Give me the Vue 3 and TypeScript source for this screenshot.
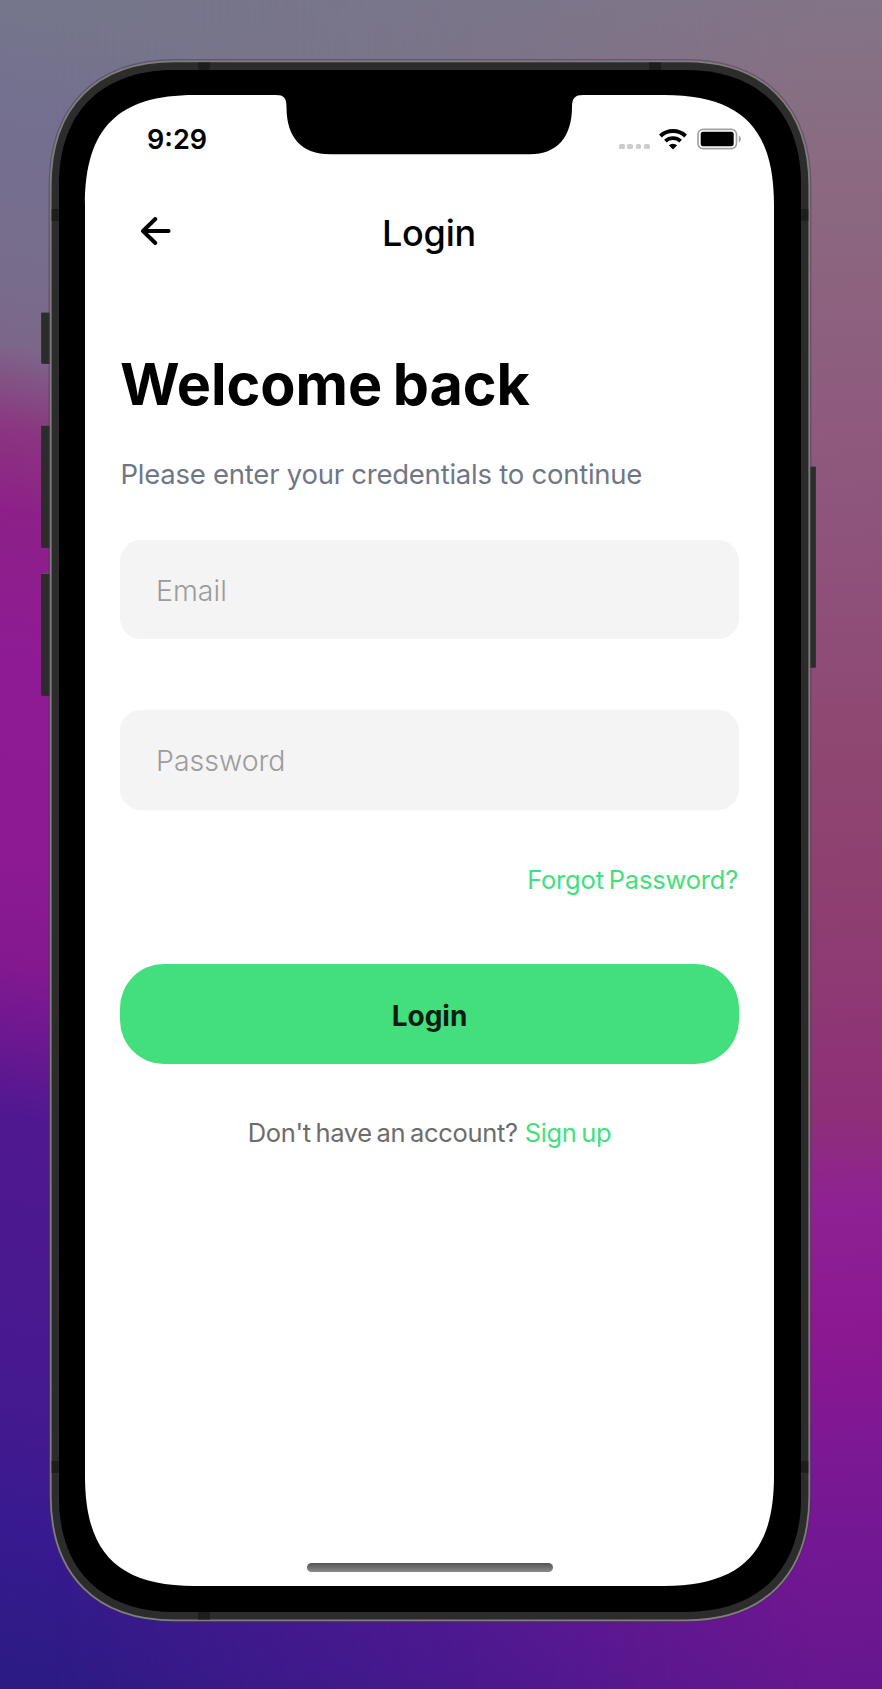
<script setup lang="ts">
import { ref } from 'vue'

const email = ref('')
const password = ref('')
const signalDots = [0, 1, 2, 3]
</script>

<template>
  <main class="stage">
    <div class="wash"></div>
    <svg class="device" viewBox="0 0 882 1689" aria-hidden="true">
      <g fill="#2c2c2c" stroke="#222" stroke-opacity=".55">
        <rect x="41.5" y="312.5" width="12" height="51" rx="1" />
        <rect x="41.5" y="425.5" width="12" height="122" rx="1" />
        <rect x="41.5" y="573.5" width="12" height="122" rx="1" />
        <rect x="806" y="466.500" width="9.500" height="201" rx="1" />
      </g>
      <g stroke="#555" stroke-width="1">
        <path d="M42 312.500H50M42 425.500H50M42 573.500H50M810 466.500H815" />
      </g>
      <path fill="none" stroke="#403048" stroke-opacity=".4" stroke-width="4" d="M50.500 186C50.500 107 96 61 175 61H685C764 61 809.500 107 809.500 186V1496C809.500 1575 764 1620.500 685 1620.500H175C96 1620.500 50.500 1575 50.500 1496Z" />
      <path fill="#2c2c2c" stroke="#807e7d" stroke-width="1.800" d="M50.700 186C50.700 107 96 61.300 175 61.300H685C764 61.300 809.300 107 809.300 186V1496C809.300 1575 764 1620.300 685 1620.300H175C96 1620.300 50.700 1575 50.700 1496Z" />
      <path fill="#1d1d1d" d="M198 62.500h12v7.500h-12zM649 62.500h12v7.500h-12zM198 1612h12v7.500h-12zM51.700 209h7.300v12h-7.300zM801 209h7.300v12h-7.300zM51.700 1461h7.300v12h-7.300zM801 1461h7.300v12h-7.300z" />
      <path d="M59 184C59 112 102 70 174 70H686C758 70 801 112 801 184V1498C801 1570 758 1612 686 1612H174C102 1612 59 1570 59 1498Z" />
      <path fill="#fff" d="M85 205C85 128 118 95 195 95H276C284 95 286.500 98 286.500 107C286.500 138 302 154.300 330 154.300H530C557 154.300 572 137 572 107C572 98 575 95 583 95H664C741 95 774 128 774 205V1476C774 1553 741 1586 664 1586H195C118 1586 85 1553 85 1476Z" />
    </svg>

    <section class="screen">
      <div class="status">
        <span class="time">9:29</span>
        <div class="indicators">
          <div class="dots"><i v-for="d in signalDots" :key="d"></i></div>
          <svg class="wifi" viewBox="0 0 28 22" width="28" height="22">
            <g fill="none" stroke="#000" stroke-width="3.900">
              <path d="M1.400 8A18.400 18.400 0 0 1 26.600 8" />
              <path d="M6.400 13.100A11.300 11.300 0 0 1 21.600 13.100" />
            </g>
            <path d="M14 21.400L9.800 17.300A6.300 6.300 0 0 1 18.200 17.300Z" />
          </svg>
          <svg class="battery" viewBox="0 0 45 22" width="45" height="22">
            <rect x="1" y="1.300" width="38.500" height="19.300" rx="5" fill="none" stroke="#a3a3a3" stroke-width="1.700" />
            <rect x="3.700" y="3.800" width="33" height="14.500" rx="2.500" />
            <path d="M41.800 7.800C44.600 8.800 44.600 13.200 41.800 14.200Z" fill="#a0a0a0" />
          </svg>
        </div>
      </div>

      <header class="nav">
        <button class="back" type="button" aria-label="Back">
          <svg viewBox="0 0 30 28" width="30" height="28" fill="none" stroke="#000" stroke-width="3.900" stroke-linecap="round" stroke-linejoin="round">
            <path d="M14.300 2L2 14L14.300 26M2.200 14H27.600" />
          </svg>
        </button>
        <span class="title">Login</span>
      </header>

      <form class="form" @submit.prevent>
        <h1>Welcome back</h1>
        <p class="lead">Please enter your credentials to continue</p>
        <input v-model="email" class="field" type="email" placeholder="Email" />
        <input v-model="password" class="field field-password" type="password" placeholder="Password" />
        <a class="forgot">Forgot Password?</a>
        <button class="submit" type="submit">Login</button>
        <p class="register"><span>Don't have an account?</span><a>Sign up</a></p>
      </form>
      <div class="home"></div>
    </section>
  </main>
</template>

<style>
body { margin: 0; }
</style>

<style scoped>
.stage {
  position: relative;
  width: 882px;
  height: 1689px;
  overflow: hidden;
  font-family: Inter, "Liberation Sans", sans-serif;
  background: linear-gradient(192deg, #75768c 182px, #74708f 280px, #786c8c 453px, #7c6788 518px, #8b3580 602px, #8d2088 680px, #8e1b94 830px, #8d1a92 1015px, #84198f 1120px, #681891 1205px, #501890 1270px, #44198f 1570px, #381a90 1670px, #2d1b84 1810px);
}
.wash {
  position: absolute;
  inset: 0;
  background: linear-gradient(178deg, #817688 0, #8b6a80 200px, #8e5b7e 440px, #8e507a 620px, #8e4670 800px, #8e3c72 980px, #8e2f78 1145px, #8e2194 1235px, #8c1890 1360px, #7c1894 1480px, #66178f 1710px);
  mask-image: linear-gradient(90deg, transparent 0, transparent 6%, rgba(0, 0, 0, .4) 50%, #000 92%);
}
.device { position: absolute; inset: 0; width: 882px; height: 1689px; }
.screen {
  position: relative;
  box-sizing: border-box;
  width: 689px;
  height: 1491px;
  margin: 95px 0 0 85px;
  display: flex;
  flex-direction: column;
}
.status {
  height: 87px;
  display: flex;
  justify-content: space-between;
  padding: 0 32px 0 62px;
  box-sizing: border-box;
}
.time { margin-top: 27.500px; font-size: 27px; line-height: 34px; font-weight: 600; height: 34px; }
.indicators { display: flex; align-items: flex-start; margin-top: 32.500px; }
.dots { display: flex; gap: 2.700px; margin: 16px 9.500px 0 0; }
.dots i { width: 5.600px; height: 5.600px; border-radius: 1.500px; background: #cdcdcd; }
.wifi { margin-right: 10px; }
.nav {
  height: 100px;
  display: grid;
  grid-template-columns: 80px 1fr 80px;
}
.back { align-self: start; border: 0; background: none; padding: 35px 0 0 56px; display: block; text-align: left; width: 100px; }
.back svg { display: block; }
.title { text-align: center; margin: 29px 1px 0 0; font-size: 36px; line-height: 44px; font-weight: 500; letter-spacing: -.2px; }
.form { display: flex; flex-direction: column; padding: 0 35px; }
h1 { margin: 61.500px 0 0; font-size: 57.500px; line-height: 80px; font-weight: 700; letter-spacing: -.05px; word-spacing: -3px; white-space: nowrap; }
.lead { margin: 32.500px 0 0; font-size: 27.500px; line-height: 36px; letter-spacing: -.24px; padding-left: .5px; color: #6f7787; white-space: nowrap; }
.field {
  box-sizing: border-box;
  height: 99px;
  margin-top: 48px;
  padding: 1px 36px 0;
  border: 0;
  border-radius: 21px;
  background: #f4f4f4;
  font: 350 28.500px Inter, sans-serif;
  outline: 0;
}
.field::placeholder { color: #9c9c9c; opacity: 1; }
.field-password { height: 99.500px; margin-top: 71.300px; padding-top: 1px; }
.forgot { margin: 53.200px 1px 0 0; height: 34px; align-self: flex-end; font-size: 25.500px; line-height: 34px; letter-spacing: -.2px; word-spacing: -2px; color: #43df7d; white-space: nowrap; }
.submit { height: 99.500px; margin-top: 67.500px; border: 0; border-radius: 44px; background: #43df7d; color: #0d1d14; font: 700 28px Inter, sans-serif; padding: 3px 0 0; }
.register { display: flex; justify-content: center; gap: 7px; margin: 52.500px 0 0; font-size: 25.500px; line-height: 34px; letter-spacing: -.32px; word-spacing: -2.200px; color: #6c6c6c; white-space: nowrap; }
.register a { color: #43df7d; }
.home { position: absolute; left: 222px; bottom: 14px; width: 246px; height: 9px; border-radius: 5px; background: linear-gradient(180deg, #525552, #8b8b8b); }
</style>
